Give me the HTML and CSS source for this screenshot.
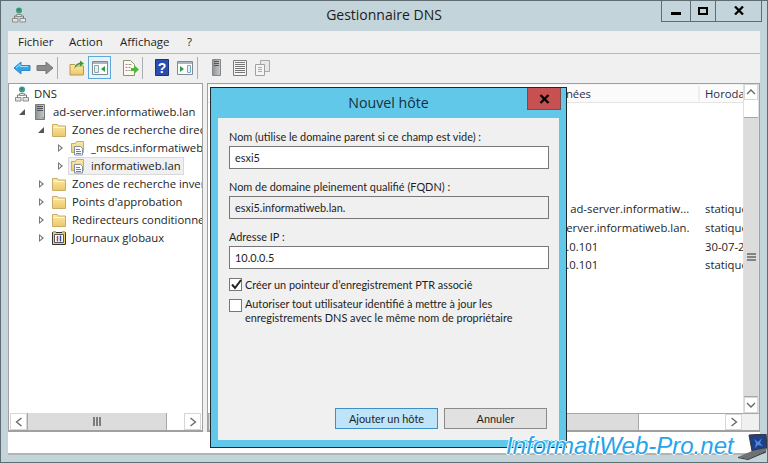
FILE: index.html
```html
<!DOCTYPE html>
<html lang="fr">
<head>
<meta charset="utf-8">
<title>Gestionnaire DNS</title>
<link rel="stylesheet" href="styles.css">
</head>
<body>
<svg class="defs" width="0" height="0" aria-hidden="true">
  <defs>
    <linearGradient id="fold" x1="0" y1="0" x2="0" y2="1"><stop offset="0" stop-color="#fbeaa8"/><stop offset="1" stop-color="#eec766"/></linearGradient>
    <linearGradient id="srv" x1="0" y1="0" x2="1" y2="0"><stop offset="0" stop-color="#8d9294"/><stop offset="1" stop-color="#c9cccd"/></linearGradient>
    <symbol id="folder" viewBox="0 0 16 16">
      <path d="M1.500 2.500h5l1 1.500h7v10.500h-13z" fill="url(#fold)" stroke="#c8ab68"/>
      <path d="M2.500 5.500h11" stroke="#fff6d0"/>
    </symbol>
    <symbol id="zone" viewBox="0 0 16 16">
      <path d="M1.500 3.500h4l1-2h7v11h-12z" fill="url(#fold)" stroke="#c8ab68"/>
      <path d="M4.500 6.500h6l2 2v6.500h-8z" fill="#fff" stroke="#7e8fa8"/>
      <path d="M6 9.500h4M6 11.500h5M6 13.500h5" stroke="#5f86b8"/>
    </symbol>
    <symbol id="dns" viewBox="0 0 16 16">
      <circle cx="8" cy="3.500" r="3" fill="#3f9f6e"/>
      <path d="M6 2.500l2-1 1.500 1-1.500 2z" fill="#2e78c8"/>
      <path d="M8 7v2M3.500 11v-2h9v2" fill="none" stroke="#777"/>
      <path d="M5.500 7.500h5v2h-5zM1.500 11.500h5.500v3.500h-5.500zM9 11.500h5.500v3.500h-5.500z" fill="#e4e4e4" stroke="#8d8d8d"/>
    </symbol>
    <symbol id="server" viewBox="0 0 16 16">
      <path d="M3.500 .5h9v15h-9z" fill="url(#srv)" stroke="#77797a"/>
      <path d="M5 2.500h6M5 4.500h6M5 6.500h6" stroke="#4f5355"/>
      <path d="M10 13h2v1.500h-2z" fill="#7ab648"/>
    </symbol>
    <symbol id="journal" viewBox="0 0 16 16">
      <path d="M1.500 2.500h13v12h-13z" fill="#f3d25e" stroke="#333"/>
      <path d="M3.500 4.500h9v8h-9z" fill="#fff" stroke="#555"/>
      <path d="M6.500 6v5.500" stroke="#c33" stroke-width="1.500"/>
      <path d="M9.500 5.500v6" stroke="#2a4bb0" stroke-width="1.500"/>
      <path d="M2 1h3v2h-3zM11 1h3v2h-3z" fill="#c9b04b"/>
    </symbol>
  </defs>
</svg>

<div class="window">
  <header class="titlebar">
    <svg class="app-icon"><use href="#dns"/></svg>
    <h1 class="app-title">Gestionnaire DNS</h1>
    <div class="controls">
      <div class="ctl ctl-min"><svg width="10" height="3"><rect width="10" height="3" fill="#000"/></svg></div>
      <div class="ctl ctl-max"><svg width="10" height="8"><rect x="1" y="1" width="8" height="6" fill="none" stroke="#000" stroke-width="2"/></svg></div>
      <div class="ctl ctl-close"><svg width="10" height="9"><path d="M1 .5l8 8M9 .5l-8 8" stroke="#000" stroke-width="2.300"/></svg></div>
    </div>
  </header>

  <div class="client">
    <nav class="menubar">
      <span class="menu m1">Fichier</span>
      <span class="menu m2">Action</span>
      <span class="menu m3">Affichage</span>
      <span class="menu m4">?</span>
    </nav>

    <div class="toolbar">
      <div class="tbtn"><svg width="18" height="14" viewBox="0 0 18 14"><path d="M1 7l7-6v3.500h9v5h-9v3.500z" fill="#35a4e8" stroke="#2a8acb"/><path d="M3 7l4-3.500v2h8" fill="none" stroke="#a9def9"/></svg></div>
      <div class="tbtn"><svg width="18" height="14" viewBox="0 0 18 14"><path d="M17 7l-7-6v3.500h-9v5h9v3.500z" fill="#8b8b8b" stroke="#777"/></svg></div>
      <span class="tsep"></span>
      <div class="tbtn"><svg width="16" height="16" viewBox="0 0 16 16"><path d="M1 4.500h5l1 1.500h7.500v9h-13.500z" fill="url(#fold)" stroke="#b79a55"/><path d="M5 9c1-4 3-6 6-6.500v-2l4 3-4 3v-2c-2 0-4 2-6 4.500z" fill="#3f9a3a"/></svg></div>
      <div class="tbtn tbtn-on"><svg width="16" height="14" viewBox="0 0 16 14"><path d="M.5.5h15v13h-15z" fill="#fff" stroke="#7b8a94"/><path d="M1 1h14v2h-14z" fill="#a9b6bf"/><path d="M2.500 4.500h4v7h-4z" fill="#e8eef2" stroke="#8aa"/><path d="M13 5v6l-4-3z" fill="#2f9c4a"/></svg></div>
      <div class="tbtn tbtn-gap"><svg width="17" height="16" viewBox="0 0 17 16"><path d="M1.500 .5h7l4 4v11h-11z" fill="#fbf9ea" stroke="#8f8f7a"/><path d="M3.500 4.500h2M3.500 7.500h2M3.500 10.500h2" stroke="#806" stroke-opacity=".5"/><path d="M6.500 4.500h3M6.500 7.500h2M6.500 10.500h2" stroke="#999"/><path d="M9 8h3v-3l5 4.500-5 4.500v-3h-3z" fill="#4fb83a"/></svg></div>
      <span class="tsep"></span>
      <div class="tbtn"><svg width="14" height="17" viewBox="0 0 14 17"><path d="M.5.5h13v16h-13z" fill="#2a4fae" stroke="#1c3478"/><text class="help-q" x="7" y="13.500" text-anchor="middle">?</text></svg></div>
      <div class="tbtn"><svg width="16" height="14" viewBox="0 0 16 14"><path d="M.5.5h15v13h-15z" fill="#fff" stroke="#7b8a94"/><path d="M1 1h14v2h-14z" fill="#a9b6bf"/><path d="M10.500 4.500h3v7h-3z" fill="#e8eef2" stroke="#7fa6c8"/><path d="M3 5v6l4-3z" fill="#2f9c4a"/></svg></div>
      <span class="tsep"></span>
      <div class="tbtn"><svg width="9" height="17" viewBox="0 0 9 17"><path d="M.5.500h8v16h-8z" fill="url(#srv)" stroke="#85888a"/><path d="M2 2.500h5M2 4.500h5M2 6.500h5" stroke="#555"/></svg></div>
      <div class="tbtn"><svg width="14" height="16" viewBox="0 0 14 16"><path d="M.5.500h13v15h-13z" fill="#f4f4f4" stroke="#7c7c7c"/><path d="M2 2.500h10M2 4.500h10M2 6.500h10M2 8.500h10M2 10.500h10M2 12.500h10" stroke="#777"/></svg></div>
      <div class="tbtn"><svg width="15" height="16" viewBox="0 0 15 16"><path d="M5.500.500h9v11h-9z" fill="#e7e7e7" stroke="#a9a9a9"/><path d="M.5 4.500h9v11h-9z" fill="#f4f4f4" stroke="#a0a0a0"/><path d="M3 7.500h4M3 9.500h4M3 11.500h4" stroke="#aaa"/></svg></div>
    </div>

    <div class="panes">
      <aside class="tree">
        <ul class="tree-list">
          <li class="node l0"><svg class="ico"><use href="#dns"/></svg><span>DNS</span></li>
          <li class="node l1"><i class="exp open"></i><svg class="ico"><use href="#server"/></svg><span>ad-server.informatiweb.lan</span></li>
          <li class="node l2"><i class="exp open"></i><svg class="ico"><use href="#folder"/></svg><span>Zones de recherche directes</span></li>
          <li class="node l3"><i class="exp"></i><svg class="ico"><use href="#zone"/></svg><span>_msdcs.informatiweb.lan</span></li>
          <li class="node l3"><i class="exp"></i><div class="sel"><svg class="ico"><use href="#zone"/></svg><span>informatiweb.lan</span></div></li>
          <li class="node l2"><i class="exp"></i><svg class="ico"><use href="#folder"/></svg><span>Zones de recherche inversée</span></li>
          <li class="node l2"><i class="exp"></i><svg class="ico"><use href="#folder"/></svg><span>Points d'approbation</span></li>
          <li class="node l2"><i class="exp"></i><svg class="ico"><use href="#folder"/></svg><span>Redirecteurs conditionnels</span></li>
          <li class="node l2"><i class="exp"></i><svg class="ico"><use href="#journal"/></svg><span>Journaux globaux</span></li>
        </ul>
        <div class="hscroll">
          <div class="sb-btn"><svg width="8" height="10"><path d="M6.500 1l-5 4 5 4" fill="none" stroke="#666" stroke-width="1.300"/></svg></div>
          <div class="sb-thumb tree-thumb"><svg width="8" height="9"><path d="M1 0v9M4 0v9M7 0v9" stroke="#666" stroke-width="1.600"/></svg></div>
          <div class="sb-rest"></div>
          <div class="sb-btn"><svg width="8" height="10"><path d="M1.500 1l5 4-5 4" fill="none" stroke="#666" stroke-width="1.300"/></svg></div>
        </div>
      </aside>

      <section class="list">
        <div class="list-main">
          <div class="list-body">
            <div class="list-head">
              <span class="col c-name">Nom</span>
              <span class="col c-type">Type</span>
              <span class="col c-data">Données</span>
              <span class="col c-time">Horodatage</span>
            </div>
            <div class="rows">
              <div class="row"><span class="c-name"></span><span class="c-type">Source de nom</span><span class="c-data">[19], ad-server.informatiw...</span><span class="c-time">statique</span></div>
              <div class="row"><span class="c-name"></span><span class="c-type">Serveur de noms</span><span class="c-data">ad-server.informatiweb.lan.</span><span class="c-time">statique</span></div>
              <div class="row"><span class="c-name"></span><span class="c-type">Hôte (A)</span><span class="c-data">10.0.0.101</span><span class="c-time">30-07-2018</span></div>
              <div class="row"><span class="c-name"></span><span class="c-type">Hôte (A)</span><span class="c-data">10.0.0.101</span><span class="c-time">statique</span></div>
            </div>
          </div>
          <div class="vscroll">
            <div class="vb-btn"><svg width="10" height="8"><path d="M1 6l4-4 4 4" fill="none" stroke="#666" stroke-width="1.300"/></svg></div>
            <div class="vb-gap"></div>
            <div class="vb-thumb"><svg width="9" height="8"><path d="M0 1h9M0 4h9M0 7h9" stroke="#666" stroke-width="1.600"/></svg></div>
            <div class="vb-btn"><svg width="10" height="8"><path d="M1 2l4 4 4-4" fill="none" stroke="#666" stroke-width="1.300"/></svg></div>
          </div>
        </div>
        <div class="hscroll list-h">
          <div class="sb-thumb list-thumb"></div>
          <div class="sb-rest"></div>
          <div class="sb-btn"><svg width="8" height="10"><path d="M1.500 1l5 4-5 4" fill="none" stroke="#666" stroke-width="1.300"/></svg></div>
          <div class="sb-corner"></div>
        </div>
      </section>
    </div>

    <footer class="statusbar"></footer>
  </div>

  <div class="dialog">
    <div class="dlg-title">
      <h2 class="dlg-name">Nouvel hôte</h2>
      <div class="dlg-close"><svg width="11" height="10"><path d="M1.500 1l8 8M9.500 1l-8 8" stroke="#000" stroke-width="2.400"/></svg></div>
    </div>
    <form class="dlg-panel">
      <div class="field">
        <label class="lbl">Nom (utilise le domaine parent si ce champ est vide) :</label>
        <div class="inp">esxi5</div>
      </div>
      <div class="field">
        <label class="lbl">Nom de domaine pleinement qualifié (FQDN) :</label>
        <div class="inp inp-ro">esxi5.informatiweb.lan.</div>
      </div>
      <div class="field field-last">
        <label class="lbl">Adresse IP :</label>
        <div class="inp">10.0.0.5</div>
      </div>
      <div class="check c-first">
        <span class="box"><svg width="13" height="11"><path d="M2 5.500l3 3.500 6-8" fill="none" stroke="#222" stroke-width="2"/></svg></span>
        <span class="check-text">Créer un pointeur d’enregistrement PTR associé</span>
      </div>
      <div class="check c-second">
        <span class="box"></span>
        <span class="check-text">Autoriser tout utilisateur identifié à mettre à jour les<br>enregistrements DNS avec le même nom de propriétaire</span>
      </div>
      <div class="dlg-actions">
        <div class="btn btn-def">Ajouter un hôte</div>
        <div class="btn">Annuler</div>
      </div>
    </form>
  </div>

  <div class="watermark">
    <span class="wm-text">InformatiWeb-Pro.net</span>
    <svg class="wm-laptop" width="31" height="26" viewBox="0 0 31 26">
      <path d="M12 1l17-1 1 14-15 3z" fill="#1f3f86" stroke="#333"/>
      <path d="M17 5l4 3 4-4-2 5 3 3-5-1-3 3 1-5z" fill="#4f8ae0"/>
      <path d="M15 17l15-3-1 3-18 8-10-2z" fill="#6e7275"/>
      <path d="M1 23l10 2 18-8v1.500l-18 7.500-10-2z" fill="#333"/>
    </svg>
  </div>
</div>
</body>
</html>
```

FILE: styles.css
```css
* { box-sizing: border-box; }
html, body { margin: 0; padding: 0; }
body {
  width: 768px;
  height: 463px;
  overflow: hidden;
  font-family: "Open Sans", "Liberation Sans", sans-serif;
  font-size: 11.300px;
  color: #1e1e1e;
}
.defs { display: block; position: absolute; }

.window {
  position: relative;
  width: 768px;
  height: 463px;
  display: flex;
  flex-direction: column;
  background: #c3d5da;
  border: 1px solid #5f6d72;
  overflow: hidden;
}

/* title bar */
.titlebar {
  height: 30px;
  flex: none;
  display: flex;
  align-items: flex-start;
  position: relative;
}
.app-icon { width: 16px; height: 16px; margin: 6px 0 0 10px; }
.app-title {
  position: absolute;
  left: 0; right: 0; top: 3px;
  margin: 0;
  text-align: center;
  font-size: 14px;
  font-weight: 400;
  line-height: 22px;
  color: #1c1c1c;
}
.controls {
  position: absolute;
  top: -1px; right: 5px;
  display: flex;
  height: 22px;
  border: 1px solid #5f6d72;
  border-top: 0;
}
.ctl { display: flex; justify-content: center; padding-top: 7px; }
.ctl-min { width: 28px; padding-top: 12px; }
.ctl-max { width: 26px; border-left: 1px solid #5f6d72; border-right: 1px solid #5f6d72; }
.ctl-close { width: 45px; padding-top: 6px; }

/* client */
.client {
  flex: 1;
  margin: 0 7px 7px;
  display: flex;
  flex-direction: column;
  background: #f0f0f0;
  min-height: 0;
}
.menubar {
  height: 23px;
  flex: none;
  display: flex;
  align-items: center;
  border-bottom: 1px solid #b4babc;
  padding-bottom: 1px;
  font-size: 11.500px;
}
.menu { display: block; }
.m1 { margin-left: 10px; width: 51px; }
.m2 { width: 51px; }
.m3 { width: 67px; }

.toolbar {
  height: 29px;
  flex: none;
  display: flex;
  align-items: center;
  padding: 0 0 2px 2px;
}
.tbtn {
  width: 23px;
  height: 23px;
  display: flex;
  align-items: center;
  justify-content: center;
}
.tbtn-on { background: #e6f3fb; border: 1px solid #5fa8dc; }
.tbtn-gap { margin-left: 8px; }
.help-q { fill: #fff; font-family: "Liberation Sans", sans-serif; font-weight: 700; font-size: 14px; }
.tsep { width: 1px; height: 22px; background: #a9aeb0; margin: 0 7px 0 1px; }
.tbtn-on + .tbtn-gap + .tsep { margin-left: 0; }

.panes {
  flex: 1;
  min-height: 0;
  display: flex;
  gap: 4px;
}

/* tree */
.tree {
  width: 195px;
  flex: none;
  background: #fff;
  border: 1px solid #a0a0a0;
  border-bottom-width: 2px;
  display: flex;
  flex-direction: column;
}
.tree-list {
  flex: 1;
  list-style: none;
  margin: 0;
  padding: 1px 0 0;
  overflow: hidden;
}
.node {
  height: 18px;
  display: flex;
  align-items: center;
  white-space: nowrap;
}
.node span { margin-left: 5px; line-height: 18px; }
.ico { width: 16px; height: 16px; flex: none; }
.exp {
  width: 18px;
  height: 18px;
  flex: none;
  position: relative;
}
.exp::before {
  content: "";
  position: absolute;
  left: 6px; top: 5px;
  width: 0; height: 0;
  border-left: 5px solid #777;
  border-top: 4px solid transparent;
  border-bottom: 4px solid transparent;
}
.exp::after {
  content: "";
  position: absolute;
  left: 7px; top: 7px;
  width: 0; height: 0;
  border-left: 2.500px solid #fff;
  border-top: 2px solid transparent;
  border-bottom: 2px solid transparent;
}
.exp.open::before {
  left: 5px; top: 6px;
  border: 0;
  border-right: 6px solid #555;
  border-top: 6px solid transparent;
}
.exp.open::after { display: none; }
.l0 { padding-left: 5px; }
.l0 span { margin-left: 4px; }
.l1 { padding-left: 5px; }
.l2 { padding-left: 24px; }
.l3 { padding-left: 43px; }
.sel {
  display: flex;
  align-items: center;
  width: 116px;
  height: 18px;
  margin-left: -2px;
  padding-left: 1px;
  background: #f0f0f0;
  border: 1px solid #d9d9d9;
}

/* scrollbars */
.hscroll {
  height: 17px;
  flex: none;
  display: flex;
  padding: 0 1px;
  background: #fff;
}
.sb-btn {
  width: 17px;
  flex: none;
  border: 1px solid #d6d6d6;
  display: flex;
  align-items: center;
  justify-content: center;
}
.sb-thumb {
  background: #dcdcdc;
  border: 1px solid #a8a8a8;
  border-width: 0 1px;
  display: flex;
  align-items: center;
  justify-content: center;
}
.tree-thumb { width: 140px; }
.sb-rest { flex: 1; }

/* list */
.list {
  flex: 1;
  min-width: 0;
  background: #fff;
  border: 1px solid #a0a0a0;
  border-bottom-width: 2px;
  display: flex;
  flex-direction: column;
}
.list-main { flex: 1; min-height: 0; display: flex; }
.list-body { flex: 1; min-width: 0; overflow: hidden; }
.list-head {
  height: 19px;
  display: flex;
  align-items: center;
  background: #fbfbfb;
  border-bottom: 1px solid #e4e4e4;
  border-top: 1px solid #f4f4f4;
  color: #2a2a4a;
  white-space: nowrap;
}
.col { display: block; padding-left: 5px; }
.c-name { width: 200px; flex: none; display: block; }
.c-type { width: 136px; flex: none; display: block; }
.c-data { width: 156px; flex: none; display: block; white-space: nowrap; overflow: hidden; padding-left: 0; }
.c-time { width: 50px; flex: none; display: block; white-space: nowrap; overflow: hidden; padding-left: 5px; }
.list-head .c-data { border-right: 2px solid #eee; }
.rows { padding-top: 96.500px; }
.row { display: flex; height: 18.700px; align-items: center; }
.vscroll {
  width: 16px;
  flex: none;
  display: flex;
  flex-direction: column;
  border-left: 1px solid #e0e0e0;
  border-right: 1px solid #e0e0e0;
}
.vb-btn {
  height: 16px;
  flex: none;
  border: 1px solid #d6d6d6;
  display: flex;
  align-items: center;
  justify-content: center;
}
.vb-gap { height: 17px; flex: none; }
.vb-thumb {
  flex: 1;
  background: #dcdcdc;
  border: 1px solid #a8a8a8;
  border-width: 1px 0;
  display: flex;
  align-items: center;
  justify-content: center;
}
.list-h { padding: 0; border-top: 1px solid #a8a8a8; }
.list-thumb { width: 431px; }
.sb-corner { width: 17px; background: #f0f0f0; flex: none; }

/* status */
.statusbar {
  height: 23px;
  flex: none;
  background: #fff;
  border-bottom: 2px solid #b0b6b8;
}

/* dialog */
.dialog {
  position: absolute;
  left: 209px;
  top: 86px;
  width: 357px;
  height: 361px;
  background: #62c8ea;
  border: 1px solid #1c2a30;
  display: flex;
  flex-direction: column;
  padding: 0 7px 7px;
  font-family: "Lato", "Open Sans", sans-serif;
  font-size: 10.900px;
}
.dlg-title { height: 30px; flex: none; position: relative; }
.dlg-name {
  margin: 0;
  text-align: center;
  font-family: "Open Sans", sans-serif;
  font-size: 14.200px;
  font-weight: 400;
  line-height: 30px;
  color: #12303a;
}
.dlg-close {
  position: absolute;
  top: 0; right: -2px;
  width: 34px;
  height: 22px;
  background: #c75050;
  border: 1px solid #7d4a48;
  border-top: 0;
  display: flex;
  align-items: center;
  justify-content: center;
}
.dlg-panel {
  flex: 1;
  background: #f0f0f0;
  padding: 10px 10px 11px 11px;
  display: flex;
  flex-direction: column;
  min-height: 0;
}
.field { margin-bottom: 9px; }
.field-last { margin-bottom: 7px; }
.lbl { display: block; line-height: 18px; }
.inp {
  width: 320px;
  height: 23px;
  background: #fff;
  border: 1px solid #777;
  padding-left: 5px;
  line-height: 21px;
}
.inp-ro { background: #f0f0f0; }
.check {
  display: flex;
  gap: 3px;
  line-height: 13.500px;
}
.c-first { height: 17px; align-items: center; }
.c-second { margin-top: 6px; }
.c-second .check-text { margin-top: -2px; }
.box {
  width: 13px;
  height: 13px;
  flex: none;
  background: #fff;
  border: 1px solid #777;
  position: relative;
}
.box svg { position: absolute; left: 0; top: 0; }
.check-text { display: block; }
.dlg-actions {
  margin-top: auto;
  display: flex;
  gap: 6px;
  justify-content: flex-end;
  padding-right: 2px;
}
.btn {
  width: 103px;
  height: 21px;
  background: #e1e1e1;
  border: 1px solid #8a8a8a;
  text-align: center;
  line-height: 19px;
}
.btn-def { background: #bfe4f9; border-color: #3d8fc4; }

/* watermark */
.watermark {
  position: absolute;
  left: 505px;
  top: 431px;
  width: 263px;
  display: flex;
  align-items: center;
  gap: 3px;
}
.wm-text {
  font-family: "Liberation Sans", Arial, sans-serif;
  font-style: italic;
  font-size: 24px;
  line-height: 26px;
  white-space: nowrap;
  color: #27a4ea;
  text-shadow: 1px 0 0 #fff, -1px 0 0 #fff, 0 1px 0 #fff, 0 -1px 0 #fff;
}
.wm-laptop { flex: none; margin-top: 2px; }
```
